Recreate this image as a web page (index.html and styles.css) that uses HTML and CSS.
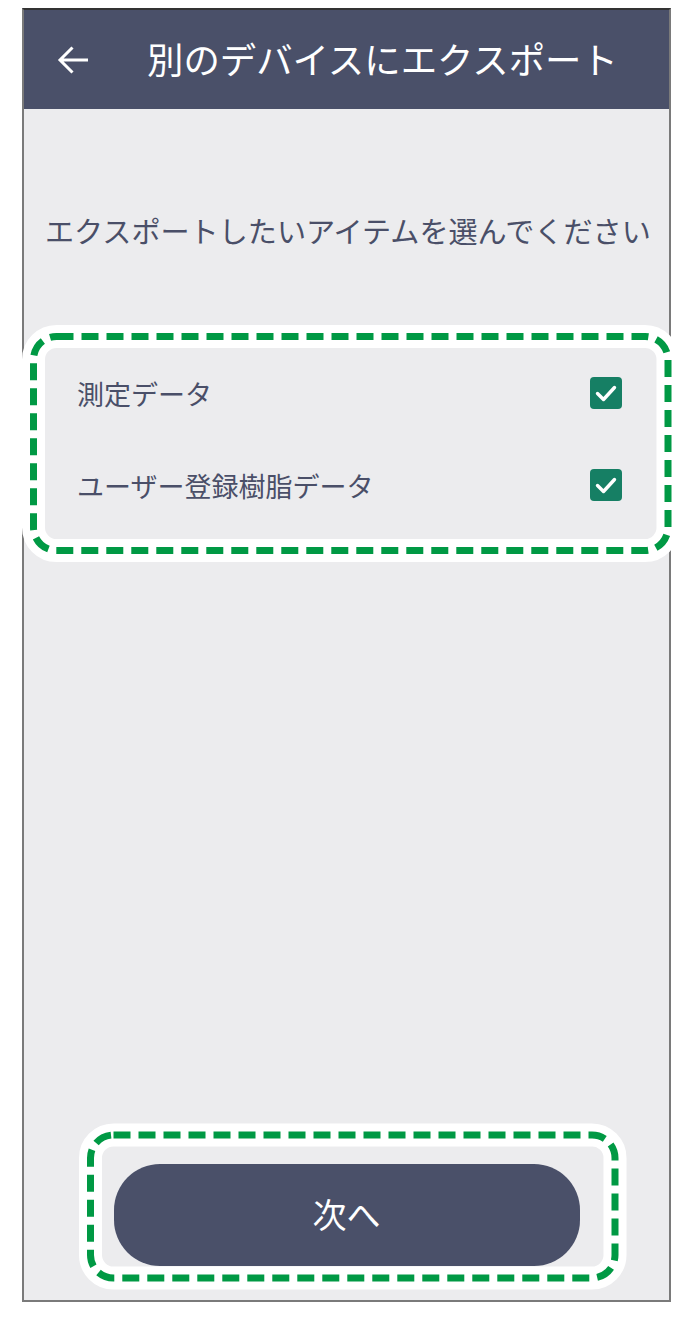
FILE: index.html
```html
<!DOCTYPE html>
<html lang="ja">
<head>
<meta charset="utf-8">
<title>別のデバイスにエクスポート</title>
<link rel="stylesheet" href="styles.css">
</head>
<body>
<div class="phone">
  <header class="appbar">
    <svg class="back" width="34" height="34" viewBox="0 0 34 34" aria-hidden="true">
      <path d="M32 17H4 M16.5 4.5 L4 17 L16.5 29.5" fill="none" stroke="#ffffff" stroke-width="3" stroke-linecap="butt" stroke-linejoin="miter"/>
    </svg>
    <h1 class="title">別のデバイスにエクスポート</h1>
  </header>
  <main class="content">
    <p class="prompt">エクスポートしたいアイテムを選んでください</p>
    <div class="items">
      <div class="item">
        <span class="label">測定データ</span>
        <span class="check">
          <svg width="32" height="32" viewBox="0 0 32 32" aria-hidden="true"><path d="M7.5 16.5 L13.5 22.5 L24.5 10.5" fill="none" stroke="#fff" stroke-width="3.4" stroke-linecap="round" stroke-linejoin="round"/></svg>
        </span>
      </div>
      <div class="item">
        <span class="label">ユーザー登録樹脂データ</span>
        <span class="check">
          <svg width="32" height="32" viewBox="0 0 32 32" aria-hidden="true"><path d="M7.5 16.5 L13.5 22.5 L24.5 10.5" fill="none" stroke="#fff" stroke-width="3.4" stroke-linecap="round" stroke-linejoin="round"/></svg>
        </span>
      </div>
      <svg class="annot annot-items" width="660" height="238" viewBox="0 0 660 238" aria-hidden="true">
        <rect x="11.5" y="11.5" width="634.5" height="214" rx="23" fill="none" stroke="#ffffff" stroke-width="23"/>
        <rect x="11.5" y="11.5" width="634.5" height="214" rx="23" fill="none" stroke="#009944" stroke-width="7" stroke-dasharray="17 8"/>
      </svg>
    </div>
    <div class="next-wrap">
      <button class="next" type="button">次へ</button>
      <svg class="annot annot-next" width="549" height="167" viewBox="0 0 549 167" aria-hidden="true">
        <rect x="12.5" y="12" width="524.5" height="143" rx="23" fill="none" stroke="#ffffff" stroke-width="23"/>
        <rect x="12.5" y="12" width="524.5" height="143" rx="23" fill="none" stroke="#009944" stroke-width="7" stroke-dasharray="17 8"/>
      </svg>
    </div>
  </main>
</div>
</body>
</html>
```

FILE: styles.css
```css
html, body {
  margin: 0;
  padding: 0;
  background: #ffffff;
}

body {
  font-family: "Noto Sans CJK JP", "Noto Sans", sans-serif;
}

.phone {
  box-sizing: border-box;
  margin: 8px 0 0 22px;
  width: 649px;
  height: 1294px;
  border: 2px solid #7a7a7a;
  border-top-color: #333333;
  background: #ececee;
  display: flex;
  flex-direction: column;
}

.appbar {
  height: 99px;
  flex: none;
  background: #4a5069;
  display: flex;
  align-items: center;
  padding-left: 32px;
}

.back {
  display: block;
  flex: none;
}

.title {
  margin: 0 0 0 57px;
  color: #ffffff;
  font-size: 36.4px;
  font-weight: 400;
  line-height: 1;
  white-space: nowrap;
  padding-bottom: 2px;
}

.content {
  flex: 1;
  display: flex;
  flex-direction: column;
  padding: 0 21px 34px;
}

.prompt {
  margin: 101px 0 0;
  text-align: center;
  color: #4a4f68;
  font-size: 29.1px;
  line-height: 40px;
  white-space: nowrap;
}

.items {
  position: relative;
  margin-top: 98px;
  padding-bottom: 10px;
  display: flex;
  flex-direction: column;
  gap: 2px;
}

.item {
  height: 90px;
  display: flex;
  align-items: center;
  justify-content: space-between;
  padding: 0 26px 0 32px;
}

.label {
  color: #4a4f68;
  font-size: 27px;
  line-height: 1;
}

.check {
  width: 32px;
  height: 32px;
  border-radius: 4px;
  background: #167f64;
  display: block;
}

.check svg {
  display: block;
}

.annot {
  position: absolute;
  pointer-events: none;
}

.annot-items {
  left: -23px;
  top: -23px;
}

.next-wrap {
  position: relative;
  margin-top: auto;
  align-self: center;
}

.next {
  display: block;
  width: 466px;
  height: 102px;
  border: 0;
  border-radius: 46px;
  background: #4a5069;
  color: #ffffff;
  font-family: "Noto Sans CJK JP", "Noto Sans", sans-serif;
  font-size: 34px;
  font-weight: 400;
  padding: 0 0 4px;
}

.annot-next {
  left: -36px;
  top: -41px;
}
```
